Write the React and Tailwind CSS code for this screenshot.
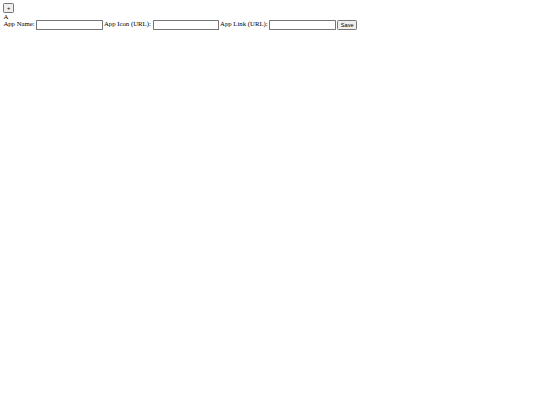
import React, { useState } from "react";

// page is drawn at 1280px width and zoomed down to 540px
export default function App() {
  const [name, setName] = useState("");
  const [icon, setIcon] = useState("");
  const [link, setLink] = useState("");

  const inputCls =
    "w-[157px] h-[22px] border border-[#767676] rounded-[2px] px-[2px] py-[1px] text-[13.333px] font-['Liberation_Sans',Arial,sans-serif] bg-white align-middle";
  const btnCls =
    "bg-[#efefef] border border-[#767676] rounded-[3px] px-[6px] py-[2px] text-[13.333px] leading-[normal] font-['Liberation_Sans',Arial,sans-serif] text-black";

  return (
    <div className="[zoom:0.421875] w-[1280px] min-h-[960px] bg-white p-2 text-base leading-[normal] text-black font-['Liberation_Serif','Times_New_Roman',serif]">
      <button className={btnCls}>+</button>
      <div>A</div>
      <div>
        App Name:{" "}
        <input className={inputCls} value={name} onChange={(e) => setName(e.target.value)} />{" "}
        App Icon (URL):{" "}
        <input className={inputCls} value={icon} onChange={(e) => setIcon(e.target.value)} />{" "}
        App Link (URL):{" "}
        <input className={inputCls} value={link} onChange={(e) => setLink(e.target.value)} />{" "}
        <button className={btnCls + " align-middle"}>Save</button>
      </div>
    </div>
  );
}
